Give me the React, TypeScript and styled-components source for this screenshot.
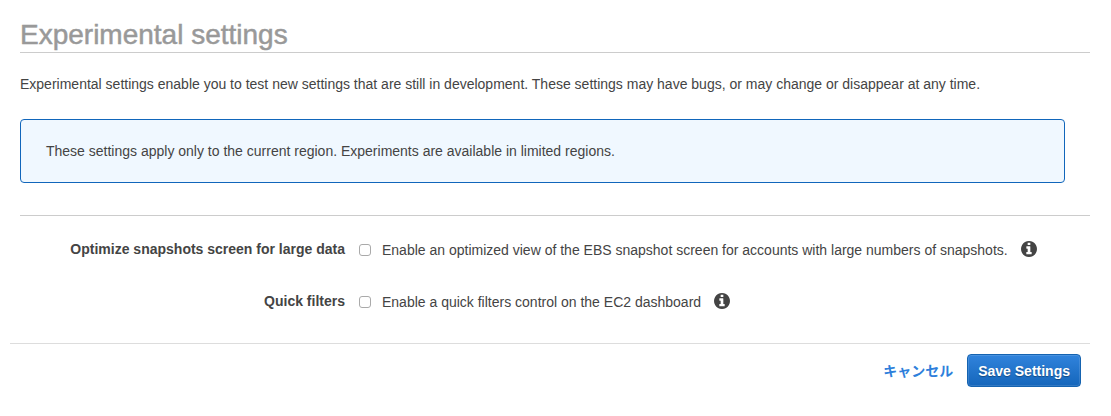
import React from "react";
import styled, { createGlobalStyle } from "styled-components";

const GlobalStyle = createGlobalStyle`
  *, *::before, *::after { box-sizing: border-box; }
  body {
    margin: 0;
    background: #fff;
    color: #444;
    font-family: "Liberation Sans", Arial, "Noto Sans CJK JP", sans-serif;
    font-size: 14px;
    line-height: 20px;
  }
`;

const Page = styled.main`
  padding: 18px 21px 16px 10px;
`;

const Content = styled.div`
  padding-left: 10px;
`;

const Title = styled.h1`
  margin: 0;
  border-bottom: 1px solid #ccc;
  color: #999;
  font-size: 28px;
  font-weight: 400;
  line-height: 34px;
  -webkit-text-stroke: 0.5px #999;
`;

const Intro = styled.p`
  margin: 21px 0 25px;
`;

const Callout = styled.div`
  margin-right: 25px;
  padding: 21px 25px;
  border: 1px solid #1166bb;
  border-radius: 4px;
  background: #f0f8ff;
`;

const Settings = styled.div`
  display: grid;
  row-gap: 32px;
  margin-top: 32px;
  padding: 24px 0 31px;
  border-top: 1px solid #ccc;
`;

const SettingRow = styled.div`
  display: grid;
  grid-template-columns: 325px 1fr;
  column-gap: 14px;
`;

const SettingName = styled.div`
  font-weight: 700;
  line-height: 18px;
  text-align: right;
`;

const SettingControl = styled.div`
  display: flex;
  align-items: center;
`;

const Option = styled.label`
  display: flex;
  align-items: center;
  gap: 11px;
`;

const Checkbox = styled.input`
  appearance: none;
  flex: none;
  width: 12px;
  height: 12px;
  margin: 0;
  border: 1px solid #aaa;
  border-radius: 3px;
  background: #fff;

  &:checked {
    border-color: #1166bb;
    background: #1166bb;
  }
`;

const InfoButton = styled.button`
  display: flex;
  margin: 0 0 2px 13px;
  padding: 0;
  border: 0;
  background: none;
  color: #444;
`;

const InfoIcon = () => (
  <svg width="16" height="16" viewBox="128 128 1536 1536" fill="currentColor" aria-hidden="true">
    <path d="M1152 1376v-160q0-14-9-23t-23-9h-96v-512q0-14-9-23t-23-9h-320q-14 0-23 9t-9 23v160q0 14 9 23t23 9h96v320h-96q-14 0-23 9t-9 23v160q0 14 9 23t23 9h448q14 0 23-9t9-23zm-128-896v-160q0-14-9-23t-23-9h-192q-14 0-23 9t-9 23v160q0 14 9 23t23 9h192q14 0 23-9t9-23zm640 416q0 209-103 385.5t-279.5 279.5-385.5 103-385.5-103-279.5-279.5-103-385.5 103-385.5 279.5-279.5 385.5-103 385.5 103 279.5 279.5 103 385.5z" />
  </svg>
);

const Footer = styled.footer`
  display: flex;
  justify-content: flex-end;
  align-items: center;
  gap: 14px;
  padding: 10px 9px 0 0;
  border-top: 1px solid #ddd;
`;

const CancelLink = styled.a`
  color: #2e7fdb;
  font-weight: 700;
  text-decoration: none;
`;

const SaveButton = styled.button`
  height: 33px;
  padding: 0 10px;
  border: 1px solid #1563b0;
  border-radius: 4px;
  background: linear-gradient(#3083dc, #1566bb);
  box-shadow: inset 0 0 0 1px rgba(255, 255, 255, 0.12);
  color: #fff;
  font: inherit;
  font-weight: 700;
  text-shadow: 0 1px 1px rgba(0, 0, 0, 0.35);
`;

const settings = [
  {
    id: "optimize-snapshots",
    name: "Optimize snapshots screen for large data",
    text: "Enable an optimized view of the EBS snapshot screen for accounts with large numbers of snapshots.",
  },
  {
    id: "quick-filters",
    name: "Quick filters",
    text: "Enable a quick filters control on the EC2 dashboard",
  },
];

export default function App() {
  return (
    <>
      <GlobalStyle />
      <Page>
        <Content>
          <Title>Experimental settings</Title>
          <Intro>
            Experimental settings enable you to test new settings that are still in development. These settings may
            have bugs, or may change or disappear at any time.
          </Intro>
          <Callout>
            These settings apply only to the current region. Experiments are available in limited regions.
          </Callout>
          <Settings>
            {settings.map((s) => (
              <SettingRow key={s.id}>
                <SettingName id={`${s.id}-name`}>{s.name}</SettingName>
                <SettingControl>
                  <Option htmlFor={s.id}>
                    <Checkbox type="checkbox" id={s.id} aria-describedby={`${s.id}-name`} />
                    {s.text}
                  </Option>
                  <InfoButton type="button" aria-label={`About ${s.name}`}>
                    <InfoIcon />
                  </InfoButton>
                </SettingControl>
              </SettingRow>
            ))}
          </Settings>
        </Content>
        <Footer>
          <CancelLink href="#">キャンセル</CancelLink>
          <SaveButton type="button">Save Settings</SaveButton>
        </Footer>
      </Page>
    </>
  );
}
